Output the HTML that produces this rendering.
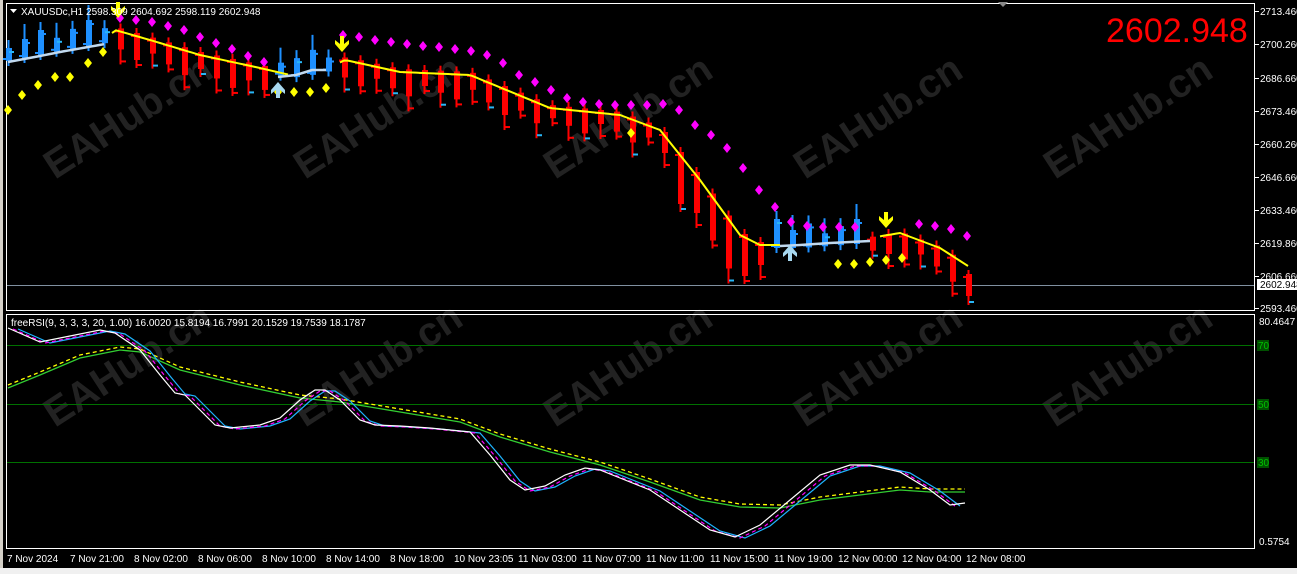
<!DOCTYPE html>
<html><head><meta charset="utf-8"><style>
html,body{margin:0;padding:0;background:#000;width:1297px;height:574px;overflow:hidden}
svg{display:block}
text{font-family:"Liberation Sans",sans-serif}
</style></head><body>
<svg id="s" width="1297" height="574" xmlns="http://www.w3.org/2000/svg">
<rect width="1297" height="574" fill="#000"/>
<rect x="0" y="568" width="1297" height="6" fill="#f0f0f0"/>
<rect x="0" y="0" width="3" height="568" fill="#d4d0c8"/>
<g id="wm" fill="#222" font-weight="bold" font-size="40">
<text transform="translate(55,180) rotate(-33)">EAHub.cn</text>
<text transform="translate(305,180) rotate(-33)">EAHub.cn</text>
<text transform="translate(555,180) rotate(-33)">EAHub.cn</text>
<text transform="translate(805,180) rotate(-33)">EAHub.cn</text>
<text transform="translate(1055,180) rotate(-33)">EAHub.cn</text>
<text transform="translate(55,428) rotate(-33)">EAHub.cn</text>
<text transform="translate(305,428) rotate(-33)">EAHub.cn</text>
<text transform="translate(555,428) rotate(-33)">EAHub.cn</text>
<text transform="translate(805,428) rotate(-33)">EAHub.cn</text>
<text transform="translate(1055,428) rotate(-33)">EAHub.cn</text>
</g>
<rect x="6.5" y="3.5" width="1248" height="307" fill="none" stroke="#fff"/>
<rect x="6.5" y="314.5" width="1248" height="234" fill="none" stroke="#fff"/>
<line x1="7" y1="285.5" x2="1254" y2="285.5" stroke="#8090a0"/>
<line x1="7" y1="345.5" x2="1254" y2="345.5" stroke="#007000"/>
<line x1="7" y1="404.5" x2="1254" y2="404.5" stroke="#007000"/>
<line x1="7" y1="462.5" x2="1254" y2="462.5" stroke="#007000"/>
<g id="dyn"></g>
<polygon points="998,2 1008,2 1003,7" fill="#888"/>
<polygon points="10,9 17,9 13.5,13" fill="#fff"/>
<text x="21" y="15" fill="#fff" font-size="10">XAUUSDc,H1  2598.309 2604.692 2598.119 2602.948</text>
<text x="1106" y="42" fill="#ff0000" font-size="34">2602.948</text>
<text x="11" y="326" fill="#fff" font-size="10">freeRSI(9, 3, 3, 3, 20, 1.00) 16.0020 15.8194 16.7991 20.1529 19.7539 18.1787</text>
<g fill="#fff" font-size="10">
<text x="1260" y="15">2713.460</text><text x="1260" y="48">2700.260</text>
<text x="1260" y="82">2686.660</text><text x="1260" y="115">2673.460</text>
<text x="1260" y="148">2660.260</text><text x="1260" y="181">2646.660</text>
<text x="1260" y="214">2633.460</text><text x="1260" y="247">2619.860</text>
<text x="1260" y="280">2606.660</text><text x="1260" y="312">2593.460</text>
<text x="1259" y="325">80.4647</text><text x="1259" y="545">0.5754</text>
</g>
<g stroke="#fff"><line x1="1255" y1="11.5" x2="1259" y2="11.5"/><line x1="1255" y1="44.5" x2="1259" y2="44.5"/><line x1="1255" y1="78.5" x2="1259" y2="78.5"/><line x1="1255" y1="111.5" x2="1259" y2="111.5"/><line x1="1255" y1="144.5" x2="1259" y2="144.5"/><line x1="1255" y1="177.5" x2="1259" y2="177.5"/><line x1="1255" y1="210.5" x2="1259" y2="210.5"/><line x1="1255" y1="243.5" x2="1259" y2="243.5"/><line x1="1255" y1="276.5" x2="1259" y2="276.5"/><line x1="1255" y1="308.5" x2="1259" y2="308.5"/></g>
<rect x="1257" y="279" width="40" height="11" fill="#fff"/>
<text x="1260" y="288" fill="#000" font-size="10">2602.948</text>
<g font-size="10" fill="#00c000"><rect x="1257" y="340" width="12" height="11" fill="#005000"/><text x="1258" y="349">70</text>
<rect x="1257" y="399" width="12" height="11" fill="#005000"/><text x="1258" y="408">50</text>
<rect x="1257" y="457" width="12" height="11" fill="#005000"/><text x="1258" y="466">30</text></g>
<g fill="#fff" font-size="10">
<text x="7" y="562">7 Nov 2024</text><text x="70" y="562">7 Nov 21:00</text><text x="134" y="562">8 Nov 02:00</text>
<text x="198" y="562">8 Nov 06:00</text><text x="262" y="562">8 Nov 10:00</text><text x="326" y="562">8 Nov 14:00</text>
<text x="390" y="562">8 Nov 18:00</text><text x="454" y="562">10 Nov 23:05</text><text x="518" y="562">11 Nov 03:00</text>
<text x="582" y="562">11 Nov 07:00</text><text x="646" y="562">11 Nov 11:00</text><text x="710" y="562">11 Nov 15:00</text>
<text x="774" y="562">11 Nov 19:00</text><text x="838" y="562">12 Nov 00:00</text><text x="902" y="562">12 Nov 04:00</text>
<text x="966" y="562">12 Nov 08:00</text>
</g>
</svg>
<script>
(function(){
var g=document.getElementById("dyn"),h="";
function interp(p,x){for(var i=0;i<p.length-1;i++){if(x<=p[i+1][0]){var t=(x-p[i][0])/(p[i+1][0]-p[i][0]);return p[i][1]+t*(p[i+1][1]-p[i][1]);}}return p[p.length-1][1];}
function pl(p,c,w,d){h+='<polyline fill="none" stroke="'+c+'" stroke-width="'+w+'"'+(d?' stroke-dasharray="'+d+'"':'')+' points="'+p.map(function(a){return a.join(",")}).join(" ")+'"/>';}
var tr=[[8,58],[40,52],[60,48],[105,40],[115,30],[150,40],[200,55],[260,68],[290,75],[325,70],[345,60],[400,72],[470,75],[550,108],[620,115],[660,130],[700,180],[740,235],[760,245],[800,245],[870,240],[900,235],[940,250],[968,268]];
function isUp(x){return x<110||(x>268&&x<332)||(x>772&&x<872);}
for(var i=0;i<62;i++){var x=8+16*i;if(x>968)break;var t=interp(tr,x);var amp=((i*23)%17)+4;var up=isUp(x);
 var col=up?"#1e90ff":"#ff0000";var bt,bb,hi,lo;
 if(up){bb=t+3;bt=t-6-amp;hi=bt-8-(i*7)%14;lo=bb+5;}
 else{bt=t-3;bb=t+6+amp;if(x>670&&x<760)bb+=25;hi=bt-5;lo=bb+8+(i*7)%14;}
 if(x==968){bt=274;bb=296;lo=305;hi=270;}
 h+='<line x1="'+(x+.5)+'" y1="'+hi+'" x2="'+(x+.5)+'" y2="'+lo+'" stroke="'+col+'" stroke-width="2"/>';
 h+='<rect x="'+(x-2)+'" y="'+bt+'" width="6" height="'+(bb-bt)+'" fill="'+col+'"/>';
 var ty=up?bt+4:lo-3;
 h+='<line x1="'+(x+1)+'" y1="'+ty+'" x2="'+(x+6)+'" y2="'+ty+'" stroke="'+(i%3?col:"#29b6f6")+'" stroke-width="2"/>';
 h+='<line x1="'+(x-5)+'" y1="'+(up?bb-2:bt+3)+'" x2="'+x+'" y2="'+(up?bb-2:bt+3)+'" stroke="'+col+'" stroke-width="2"/>';
}
function seg(a,b){var p=[];for(var x=a;x<=b;x+=4)p.push([x,interp(tr,x)]);return p;}
pl(seg(8,105).map(function(a){return[a[0],a[1]+4]}),"#c0d8ee",2.5);
pl(seg(112,290),"#ffff00",2);
pl([[278,77],[296,75],[312,70],[326,70]],"#c0d8ee",2.5);
pl(seg(340,780),"#ffff00",2);
pl([[780,246],[800,245],[830,243],[850,242],[870,241]],"#c0d8ee",2.5);
pl(seg(880,968).map(function(a){return[a[0],a[1]-2]}),"#ffff00",2);
function dia(x,y,c){h+='<polygon points="'+x+','+(y-5)+' '+(x+4)+','+y+' '+x+','+(y+5)+' '+(x-4)+','+y+'" fill="'+c+'"/>';}
[[120,18],[136,20],[152,22],[168,26],[184,30],[200,37],[216,43],[232,49],[248,56],[264,62],[343,35],[359,37],[375,40],[391,42],[407,44],[423,46],[439,47],[455,49],[471,51],[487,55],[503,63],[519,75],[535,82],[551,90],[567,98],[583,102],[599,104],[615,105],[631,105],[647,105],[663,104],[679,110],[695,125],[711,135],[727,148],[743,168],[759,190],[775,207],[791,222],[807,226],[823,227],[839,227],[855,227],[919,224],[935,226],[951,229],[967,236]].forEach(function(a){dia(a[0],a[1],"#ff00ff")});
[[8,110],[22,95],[38,85],[55,77],[70,77],[88,63],[103,52],[278,92],[294,92],[310,92],[326,88],[631,133],[838,264],[854,264],[870,262],[886,260],[902,258]].forEach(function(a){dia(a[0],a[1],"#ffff00")});
function dn(x,y,c){h+='<path d="M'+(x-2)+','+(y-10)+'h4v8l5,-4v4l-7,8l-7,-8v-4l5,4z" fill="'+c+'"/>';}
function upA(x,y,c){h+='<path d="M'+(x-2)+','+(y+10)+'h4v-8l5,4v-4l-7,-8l-7,8v4l5,-4z" fill="'+c+'"/>';}
dn(118,12,"#ffff00");dn(342,46,"#ffff00");dn(886,222,"#ffff00");
upA(278,88,"#a8d8f0");upA(790,251,"#a8d8f0");
var wh=[[8,328],[40,342],[60,338],[100,330],[115,333],[140,350],[160,375],[175,393],[185,395],[200,410],[215,425],[230,428],[260,425],[280,418],[300,400],[315,390],[325,390],[340,400],[360,420],[375,425],[400,426],[430,428],[470,432],[490,455],[510,480],[525,490],[545,486],[565,475],[585,468],[600,470],[620,478],[650,490],[680,510],[710,530],[735,537],[760,525],[790,500],[820,475],[850,465],[870,465],[900,472],[930,490],[950,505],[965,503]];
function shift(p,dx,dy){return p.map(function(a){return[a[0]+dx,a[1]+dy]});}
var gr=[[8,388],[40,375],[80,358],[120,350],[140,352],[180,370],[240,385],[300,398],[340,402],[400,412],[460,422],[500,437],[550,452],[600,465],[650,482],[700,500],[740,507],[780,508],[820,500],[860,495],[900,490],[930,492],[965,492]];
pl(shift(gr,0,-3),"#ffff00",1.3,"4,3");
pl(gr,"#32cd32",1.3);
pl(shift(wh,10,1).filter(function(a){return a[0]<=968}),"#1eb4ff",1.2);
pl(shift(wh,5,1).filter(function(a){return a[0]<=968}),"#ff00ff",1.2,"4,3");
pl(wh,"#ffffff",1.2);
g.innerHTML=h;
})();
</script>
</body></html>
